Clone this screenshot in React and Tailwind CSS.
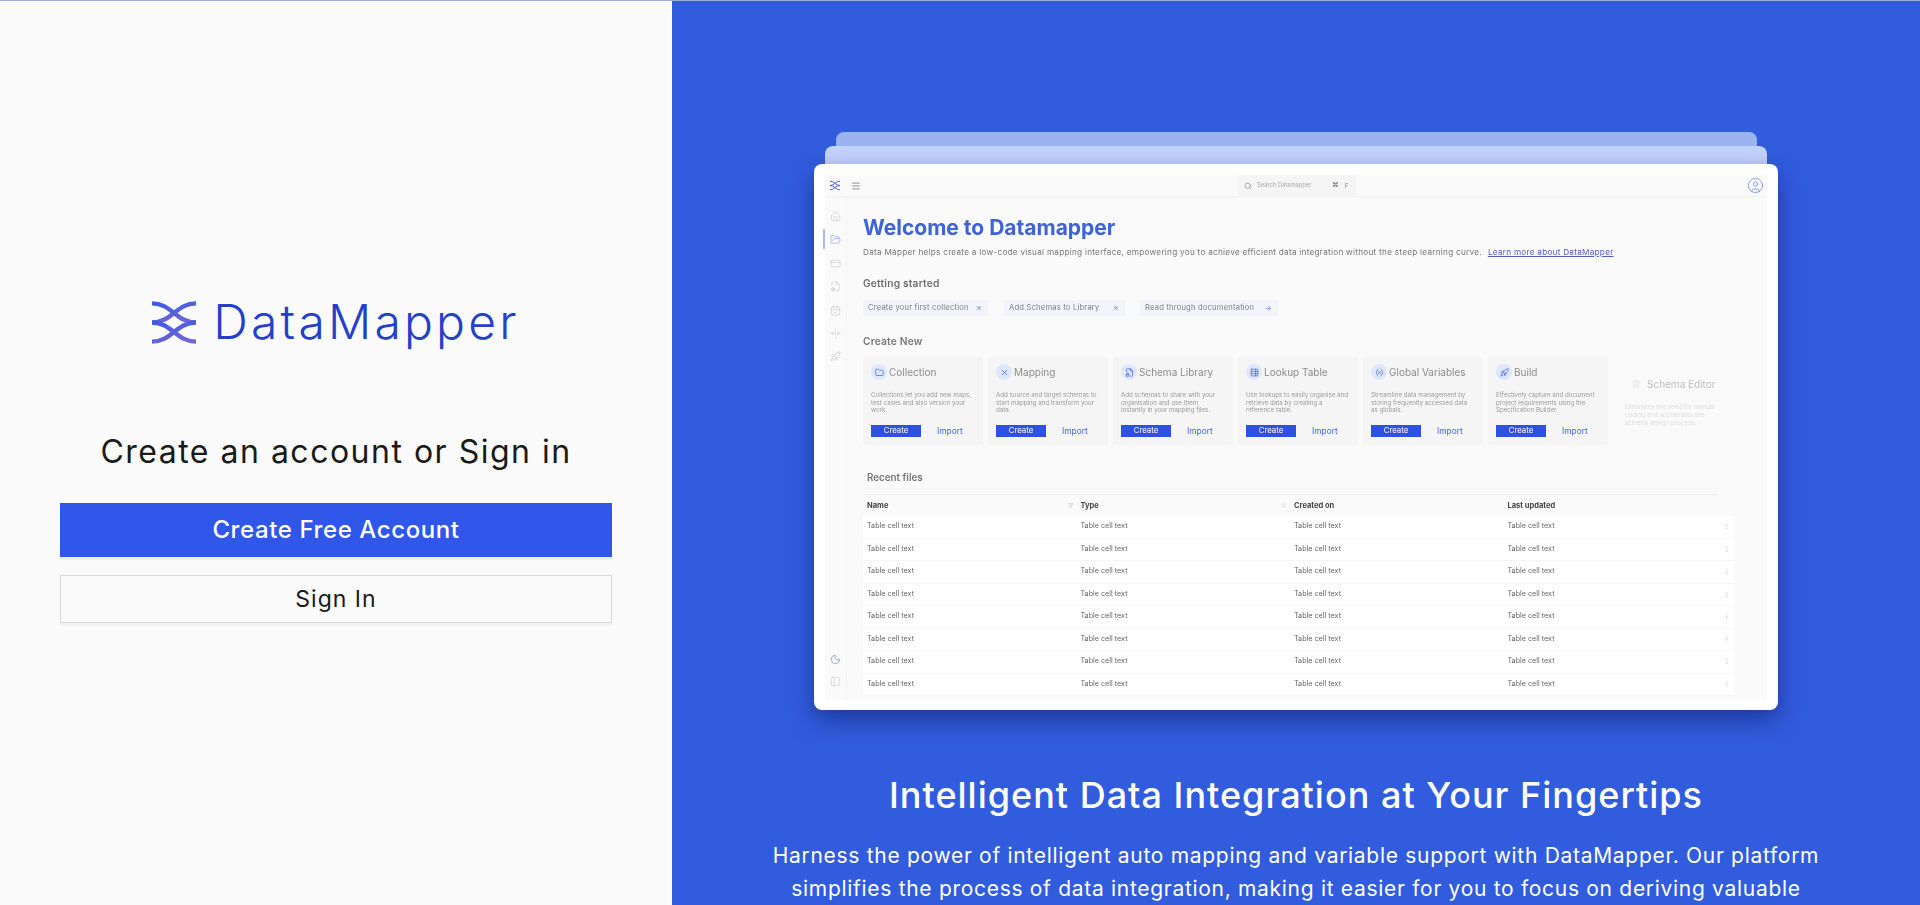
import {
  Home,
  FolderOpen,
  CreditCard,
  FileCog,
  CalendarCheck,
  FoldHorizontal,
  Rocket,
  Moon,
  PanelLeft,
  Search,
  Menu,
  CircleUser,
  ArrowUpRight,
  ArrowRight,
  X,
  FileLock,
  TableProperties,
  Variable,
  Folder,
  FileCode,
  Filter,
  ChevronsUpDown,
  EllipsisVertical,
} from 'lucide-react'

function Logo({ className }) {
  return (
    <svg viewBox="0 0 44 43" fill="none" className={className}>
      <defs>
        <linearGradient id="dm" x1="0" y1="0" x2="0.6" y2="1">
          <stop offset="0" stopColor="#3b5ce4" />
          <stop offset="1" stopColor="#7064d6" />
        </linearGradient>
      </defs>
      <g stroke="url(#dm)" strokeWidth="4.4">
        <path d="M0 2.4C20 2.4 24 21.5 44 21.5" />
        <path d="M44 2.4C24 2.4 20 21.5 0 21.5" />
        <path d="M0 21.5C20 21.5 24 40.6 44 40.6" />
        <path d="M44 21.5C24 21.5 20 40.6 0 40.6" />
      </g>
    </svg>
  )
}

const sideIcons = [Home, FolderOpen, CreditCard, FileCog, CalendarCheck, FoldHorizontal, Rocket]

const cards = [
  { icon: Folder, title: 'Collection', lines: ['Collections let you add new maps,', 'test cases and also version your', 'work.'] },
  { icon: X, title: 'Mapping', lines: ['Add source and target schemas to', 'start mapping and transform your', 'data.'] },
  { icon: FileLock, title: 'Schema Library', lines: ['Add schemas to share with your', 'organisation and use them', 'instantly in your mapping files.'] },
  { icon: TableProperties, title: 'Lookup Table', lines: ['Use lookups to easily organise and', 'retrieve data by creating a', 'reference table.'] },
  { icon: Variable, title: 'Global Variables', lines: ['Streamline data management by', 'storing frequently accessed data', 'as globals.'] },
  { icon: Rocket, title: 'Build', lines: ['Effectively capture and document', 'project requirements using the', 'Specification Builder.'] },
]

function CreateCard({ icon: Icon, title, lines }) {
  return (
    <div className="w-[120px] h-[88px] bg-[#f5f5f6] rounded-[2px] px-2 pt-[7px]">
      <div className="flex items-center gap-[2px] h-4">
        <div className="w-4 h-4 rounded-full bg-[#dfe7fd] flex items-center justify-center">
          <Icon size={9} className="text-[#4a6be4]" />
        </div>
        <span className="text-[10px] text-[#8b8b8b] whitespace-nowrap">{title}</span>
      </div>
      <p className="mt-[11px] h-[23px] text-[6.2px] leading-[7.7px] text-[#9a9a9a] whitespace-nowrap">
        {lines.map((l) => (
          <span key={l} className="block">{l}</span>
        ))}
      </p>
      <div className="mt-[11px] flex items-center">
        <div className="w-[50px] h-3 bg-[#2f50e4] text-white text-[7.8px] flex items-center justify-center">Create</div>
        <span className="ml-4 text-[8.4px] text-[#4564e2]">Import</span>
      </div>
    </div>
  )
}

function Chip({ label, width, icon: Icon }) {
  return (
    <div className="h-4 bg-[#f3f5fd] flex items-center justify-between pl-[5px] pr-[6px] rounded-[1px]" style={{ width }}>
      <span className="text-[7.6px] tracking-[0.2px] text-[#808080] whitespace-nowrap">{label}</span>
      <Icon size={7} className="text-[#5b66d8]" />
    </div>
  )
}

function AppPreview() {
  return (
    <div className="w-[921px] pt-[14px] bg-[#9cb3f1] rounded-t-[8px]">
      <div className="-mx-[10.5px] pt-[18px] bg-[#c4d3fc] rounded-t-[8px]">
        <div className="-mx-[11px] h-[546px] bg-white rounded-[8px] px-[11px] pt-[11px] pb-[10px] shadow-[0_10px_24px_rgba(16,32,110,0.6)]">
          <div className="blur-[0.6px] h-full flex flex-col">
            {/* top bar */}
            <div className="h-[22px] bg-[#fafafa] border-b border-[#f1f1f1] flex items-center pl-[5px] pr-[3px]">
              <Logo className="w-[10px] h-[11px]" />
              <Menu size={10} className="ml-[11px] text-[#777]" />
              <div className="ml-[377px] w-[118px] h-[22px] bg-[#f5f5f5] flex items-center pl-[6px]">
                <Search size={8} className="text-[#888]" />
                <span className="ml-[5px] w-[75px] text-[5.8px] text-[#aaa]">Search Datamapper</span>
                <span className="text-[7px] font-bold text-[#888]">⌘</span>
                <span className="ml-[6px] text-[6px] text-[#888]">F</span>
              </div>
              <CircleUser size={17} strokeWidth={1} className="ml-auto text-[#5f7de8]" />
            </div>

            <div className="flex-1 flex">
              {/* sidebar */}
              <div className="w-[22px] bg-[#fafafa] border-r border-[#f4f4f4] flex flex-col justify-between items-center pt-[14px] pb-[13px]">
                <div className="flex flex-col gap-[12.4px]">
                  {sideIcons.map((Icon, i) => (
                    <div key={i} className="relative">
                      {i === 1 && <div className="absolute -left-[7px] -top-[5px] w-[2px] h-[20px] bg-[#aab9f0]" />}
                      <Icon size={11} strokeWidth={1.2} className={i === 1 ? 'text-[#7c90e8]' : 'text-[#c4c4c4]'} />
                    </div>
                  ))}
                </div>
                <div className="flex flex-col gap-[11px]">
                  <Moon size={11} strokeWidth={1.3} className="text-[#5f76e0]" />
                  <PanelLeft size={11} strokeWidth={1.2} className="text-[#c4c4c4]" />
                </div>
              </div>

              {/* main */}
              <div className="flex-1 bg-[#fafafa] pl-4">
                <h2 className="mt-[17px] h-7 leading-7 text-[21px] font-bold text-[#3e63d8] whitespace-nowrap">Welcome to Datamapper</h2>
                <p className="mt-1 h-3 leading-3 text-[8.2px] tracking-[0.26px] text-[#777] whitespace-nowrap">
                  Data Mapper helps create a  low-code visual mapping interface, empowering you to achieve efficient data integration without the steep learning curve.
                  <span className="ml-[6px] text-[#4f62c4] underline">Learn more about DataMapper</span>
                </p>
                <h3 className="mt-[18px] h-[14px] leading-[14px] text-[10.2px] tracking-[0.2px] font-semibold text-[#6e6e6e]">Getting started</h3>
                <div className="mt-[10px] flex">
                  <Chip label="Create your first collection" width={125} icon={ArrowUpRight} />
                  <div className="ml-4"><Chip label="Add Schemas to Library" width={121} icon={ArrowUpRight} /></div>
                  <div className="ml-[15px]"><Chip label="Read through documentation" width={138} icon={ArrowRight} /></div>
                </div>
                <h3 className="mt-[18px] h-[14px] leading-[14px] text-[10.2px] tracking-[0.2px] font-semibold text-[#777]">Create New</h3>
                <div className="mt-[9px] flex gap-[5px]">
                  {cards.map((c) => (
                    <CreateCard key={c.title} {...c} />
                  ))}
                  <div className="ml-3 pt-[19px]">
                    <div className="flex items-center gap-[7px] h-4 pl-[7px]">
                      <FileCode size={8} className="text-[#dcdcdc]" />
                      <span className="text-[10px] text-[#bdbdbd] whitespace-nowrap">Schema Editor</span>
                    </div>
                    <p className="mt-[11px] text-[6.2px] leading-[8px] text-[#dddddd] whitespace-nowrap">
                      <span className="block">Eliminates the need for manual</span>
                      <span className="block">coding and accelerates the</span>
                      <span className="block">schema design process.</span>
                    </p>
                  </div>
                </div>
                <h3 className="mt-[27px] pl-1 h-3 leading-3 text-[9.8px] font-semibold text-[#777]">Recent files</h3>

                <div className="mt-[10px] w-[855px] h-[22px] border-t border-[#f0f0f0] grid grid-cols-[213.5px_213.5px_213.5px_1fr] items-center pl-1 text-[7.5px] font-bold text-[#444]">
                  <div className="flex items-center justify-between pr-[8px]">
                    <span>Name</span>
                    <Filter size={5} className="text-[#aaa]" />
                  </div>
                  <div className="flex items-center justify-between pr-[8px]">
                    <span>Type</span>
                    <ChevronsUpDown size={5} className="text-[#aaa]" />
                  </div>
                  <span>Created on</span>
                  <span>Last updated</span>
                </div>
                <div className="w-[871px] bg-white">
                  {[1, 2, 3, 4, 5, 6, 7, 8].map((n) => (
                    <div key={n} className="h-[22.5px] border-b border-[#f6f6f6] grid grid-cols-[213.5px_213.5px_213.5px_1fr] items-center pl-1 text-[7.2px] text-[#666]">
                      <span>Table cell text</span>
                      <span>Table cell text</span>
                      <span>Table cell text</span>
                      <div className="flex items-center justify-between pr-[4px]">
                        <span>Table cell text</span>
                        <EllipsisVertical size={7} className="text-[#ccc]" />
                      </div>
                    </div>
                  ))}
                </div>
              </div>
            </div>
          </div>
        </div>
      </div>
    </div>
  )
}

export default function App() {
  return (
    <div className="h-screen overflow-hidden flex flex-col font-['Inter',sans-serif]">
      <div className="h-px shrink-0 bg-[#a0aed6]" />
      <div className="flex-1 flex min-h-0">
        <div className="w-[672px] shrink-0 bg-[#fafafa] px-[60px] flex flex-col">
          <div className="mt-[299px] flex items-center justify-center gap-[17px] h-[44px]">
            <Logo className="w-[44px] h-[43px]" />
            <span className="text-[48px] tracking-[3.2px] font-light text-[#2340c9] whitespace-nowrap leading-none">DataMapper</span>
          </div>
          <h1 className="mt-[90px] h-9 leading-9 text-center text-[32px] tracking-[1.5px] text-[#1a1a1a] whitespace-nowrap">Create an account or Sign in</h1>
          <button className="mt-[33px] h-[54px] bg-[#3056ea] text-white text-[24px] tracking-[0.6px] font-medium shadow-[0_3px_0_#e8f0fc]">Create Free Account</button>
          <button className="mt-[18px] h-[48px] border border-[#d8d8d8] text-[23px] tracking-[1px] text-[#1a1a1a] shadow-[0_3px_0_#f3f3f3]">Sign In</button>
        </div>

        <div className="flex-1 bg-[#325cde] flex flex-col items-center pt-[131px]">
          <AppPreview />
          <h2 className="mt-[60px] h-[50px] leading-[50px] text-[36px] tracking-[1px] font-medium text-white whitespace-nowrap">Intelligent Data Integration at Your Fingertips</h2>
          <p className="mt-[19px] w-[1060px] text-center text-[21px] tracking-[0.7px] leading-[33px] text-white">
            Harness the power of intelligent auto mapping and variable support with DataMapper. Our platform simplifies the process of data integration, making it easier for you to focus on deriving valuable
          </p>
        </div>
      </div>
    </div>
  )
}
